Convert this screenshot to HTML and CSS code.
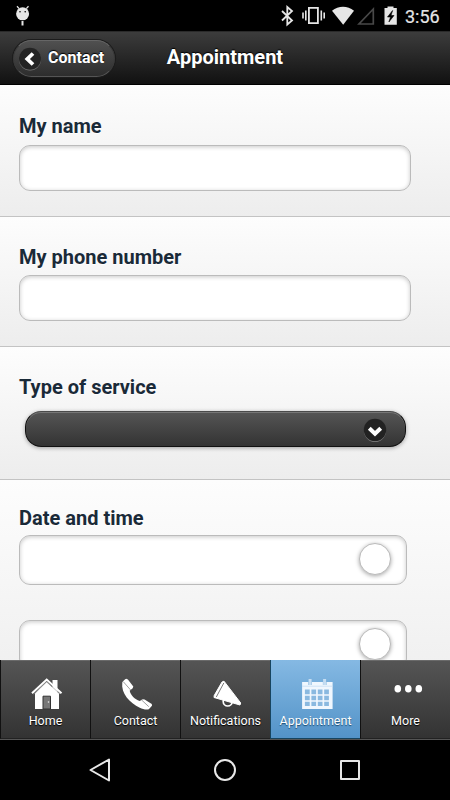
FILE: index.html
```html
<!DOCTYPE html>
<html lang="en">
<head>
<meta charset="utf-8">
<title>Appointment</title>
<link rel="stylesheet" href="styles.css">
</head>
<body>
<div class="screen">
  <div class="status">
    <svg class="debug" width="16" height="22" viewBox="0 0 16 22" fill="#e6e6e6">
      <path d="M2 1.300 4.200 3.600M13.500 1.300 11.300 3.600" stroke="#e6e6e6" stroke-width="1.300"/>
      <circle cx="7.600" cy="8.800" r="6.500"/>
      <circle cx="5" cy="6.800" r=".8" fill="#000"/><circle cx="10.200" cy="6.800" r=".8" fill="#000"/>
      <path d="M6.500 16h2v4.500h-2z"/>
    </svg>
    <svg class="signals" width="120" height="31" viewBox="280 0 120 31">
      <path d="M282 11l10 9.500-4.700 4V7l4.700 4-10 9.500" fill="none" stroke="#e6e6e6" stroke-width="1.800"/>
      <path d="M308.900 7.900h9v15.200h-9z" fill="none" stroke="#e6e6e6" stroke-width="1.800"/>
      <path d="M305.800 10.500v10M303 12.500v6M321.300 10.500v10M324.200 12.500v6" stroke="#e6e6e6" stroke-width="1.600"/>
      <path d="M332 10.800C338.500 5.400 347.500 5.400 354 10.800L343.200 24.700z" fill="#e6e6e6"/>
      <path d="M359 24h14.300V9z" fill="none" stroke="#484848" stroke-width="1.700"/>
      <path d="M387.500 6.500h6v1.600h3.300v16.600h-12.300V8.100h3z" fill="#e6e6e6"/>
      <path d="M392.600 10.500 387.500 17h3l-1.600 5 5.100-6.500h-3z" fill="#000" stroke="#000" stroke-width=".6"/>
    </svg>
    <span class="clock">3:56</span>
  </div>
  <header class="header">
    <div class="back">
      <svg class="disc" width="24" height="24" viewBox="0 0 24 24"><circle cx="12" cy="12.500" r="11" fill="#777"/><circle cx="12" cy="11.700" r="11" fill="#242424"/><path d="M15 6.500 9.300 12l5.700 5.500" fill="none" stroke="#fff" stroke-width="3.800"/></svg>
      <span>Contact</span>
    </div>
    <h1>Appointment</h1>
  </header>
  <main class="form">
    <section class="row name"><label>My name</label><div class="field"></div></section>
    <section class="row phone"><label>My phone number</label><div class="field"></div></section>
    <section class="row service"><label>Type of service</label>
      <div class="select"><svg width="24" height="25" viewBox="0 0 24 25"><circle cx="12" cy="13" r="11" fill="#888"/><circle cx="12" cy="12" r="11.200" fill="#222"/><path d="M6.300 10.200 12 15.700l5.700-5.500" fill="none" stroke="#fff" stroke-width="4"/></svg></div>
    </section>
    <section class="row date"><label>Date and time</label>
      <div class="field picker"><i></i></div>
      <div class="field picker"><i></i></div>
    </section>
  </main>
  <nav class="tabs">
    <div class="tab">
      <svg width="34" height="34" viewBox="0 0 34 34"><path d="M23.500 3h5v12h-5zM6 16.500 17.500 5 30 16.500V32H6z" fill="#fff"/><path d="M3 16.200 17.700 2.500 32.500 16.200" fill="none" stroke="#fff" stroke-width="2"/><path d="M4.500 17 17.700 4.800 31 17" fill="none" stroke="#aaa" stroke-width=".7"/><path d="M14 19.200h7.500V32H14z" fill="#777" stroke="#333"/><circle cx="19.500" cy="25" r=".8" fill="#eee"/></svg>
      <span>Home</span>
    </div>
    <div class="tab">
      <svg width="34" height="34" viewBox="-.8 -.7 34 34"><path d="M2.500 4.500C3.500 3 5 1.500 6.500 1l1.600.8 5.400 7-.6 1.800-3 2.400c1 4.500 5 8.500 10 10.200l3.100-1.700 1.800.2 7.200 4.600.2 1.800-3.200 3.400c-2.500.8-6 0-9-1.500C10 25 1 16 2.500 4.500z" fill="#fff"/><path d="M3.500 4l7.500 8.500M21.500 22l7.500 7" stroke="#777" stroke-width=".7"/></svg>
      <span>Contact</span>
    </div>
    <div class="tab">
      <svg width="34" height="34" viewBox="0 0 34 34"><circle cx="18.700" cy="24.500" r="4.500" fill="none" stroke="#fff" stroke-width="1.700"/><path d="M15 4.200 31.700 26 31 28 5 20.500 5.200 18.500 13 5z" fill="#fff" stroke="#fff" stroke-linejoin="round"/><path d="M14.800 6 7.300 20" stroke="#555" stroke-width=".8"/></svg>
      <span>Notifications</span>
    </div>
    <div class="tab active">
      <svg width="34" height="34" viewBox="-.6 -.5 34 34"><path d="M10.500 1.500v6M25 1.500v6" stroke="#c5ddf2" stroke-width="3"/><path d="M2.500 4.500h6.200v3h3.600v-3h11v3h3.600v-3H33v27H2.500z" fill="#f0f7fe"/><path d="M5.300 12h4.800v4.700H5.300zm6.500 0h4.700v4.700h-4.700zm6.400 0h4.700v4.700h-4.700zm6.400 0h4.700v4.700h-4.700zM5.300 18.200h4.800v4.500H5.300zm6.500 0h4.700v4.500h-4.700zm6.400 0h4.700v4.500h-4.700zm6.400 0h4.700v4.500h-4.700zM5.300 24.300h4.800v4.300H5.300zm6.500 0h4.700v4.300h-4.700zm6.400 0h4.700v4.300h-4.700zm6.400 0h4.700v4.300h-4.700z" fill="#8ab9e0"/><path d="M2.500 8.700H33" stroke="#c5ddf2" stroke-width=".8"/></svg>
      <span>Appointment</span>
    </div>
    <div class="tab">
      <svg width="34" height="34" viewBox="-.3 -.3 34 34"><g fill="#fff"><ellipse cx="8.500" cy="11.500" rx="3.300" ry="3.800"/><ellipse cx="19" cy="11.500" rx="3.300" ry="3.800"/><ellipse cx="29.500" cy="11.500" rx="3.300" ry="3.800"/></g></svg>
      <span>More</span>
    </div>
  </nav>
  <div class="system">
    <svg width="450" height="60" viewBox="0 740 450 60" fill="none" stroke="#e8e8e8" stroke-width="2" stroke-linejoin="round"><path d="M90.500 770 109 759.500v21z"/><circle cx="225" cy="770" r="10"/><path d="M341 761h18v18h-18z"/></svg>
  </div>
</div>
</body>
</html>
```
FILE: styles.css
```css
* { box-sizing: border-box; }
body { margin: 0; font-family: Roboto, "Liberation Sans", sans-serif; background: #000; }
svg { display: block; flex: none; }
.screen { width: 450px; height: 800px; display: flex; flex-direction: column; overflow: hidden; }
.status { height: 31px; flex: none; background: #000; display: flex; align-items: flex-start; color: #e6e6e6; }
.debug { margin: 5px 0 0 15px; }
.signals { margin-left: 249px; }
.clock { margin-left: 5px; font-size: 18px; line-height: 33px; font-weight: 400; -webkit-text-stroke: .2px #e6e6e6; }
.header { height: 54px; flex: none; display: grid; grid-template-columns: 115px 1fr 115px; align-items: start; padding-top: 8px; background: linear-gradient(#3c3c3c, #111); border-top: 1px solid #2a2a2a; border-bottom: 1px solid #000; color: #fff; text-shadow: 0 -1px 1px #000; }
.back { width: 102px; height: 37px; margin-left: 13px; padding-left: 4px; display: flex; align-items: center; gap: 6px; border-radius: 19px; border: 1px solid #666; border-left-color: #3a3a3a; border-right-color: #3a3a3a; border-bottom-color: #555; background: linear-gradient(#505050, #2d2d2d); font-size: 16px; font-weight: 700; box-shadow: 0 0 0 1px #1c1c1c; }
.back span { line-height: 18px; padding-bottom: 1px; }
.header h1 { margin: 0; font-size: 20px; line-height: 35px; text-align: center; font-weight: 700; }
.form { flex: 1; min-height: 0; overflow: hidden; background: #eee; }
.row { display: flex; flex-direction: column; align-items: flex-start; padding-left: 19px; background: linear-gradient(#fdfdfd, #ededed); border-bottom: 1px solid #c3c3c3; }
.row label { font-size: 20px; line-height: 24px; font-weight: 700; color: #1a2a38; text-shadow: 0 1px 0 #fff; }
.name { height: 132px; padding-top: 29px; }
.phone { height: 130px; padding-top: 28px; }
.service { height: 133px; padding-top: 28px; }
.date { height: 234px; padding-top: 26px; }
.field { width: 392px; height: 46px; margin-top: 7px; border: 1px solid #bbb; border-radius: 11px; background: #fff; box-shadow: inset 0 1px 4px rgba(0,0,0,.22); }
.phone .field { margin-top: 6px; }
.picker { width: 388px; height: 50px; margin-top: 5px; display: flex; justify-content: flex-end; padding: 7px 15px 0; flex: none; }
.picker + .picker { margin-top: 35px; }
.picker i { width: 32px; height: 32px; border-radius: 50%; background: #fff; border: 1px solid #bbb; box-shadow: 0 1px 4px rgba(0,0,0,.35); }
.select { width: 381px; height: 36px; margin: 12px 0 0 6px; display: flex; justify-content: flex-end; padding: 6px 18px 0 0; border: 1px solid #111; border-top-color: #4a4a4a; border-radius: 16px; background: linear-gradient(#555, #333); box-shadow: inset 0 1px 0 #777, 0 1px 4px rgba(0,0,0,.35); }
.tabs { height: 80px; flex: none; display: grid; grid-template-columns: repeat(5, 1fr); border-bottom: 1px solid #555; background: #333; }
.tab { display: flex; flex-direction: column; align-items: center; padding-top: 17px; border-left: 1px solid #111; border-bottom: 1px solid #222; background: linear-gradient(#555, #333); color: #fff; box-shadow: inset 0 1px 0 #6a6a6a; text-shadow: 0 1px 1px #000; }
.tab span { font-size: 12.5px; line-height: 16px; margin-top: 2px; }
.tab.active { background: linear-gradient(#85b9e3, #5393c8); border-color: #17445f; box-shadow: none; text-shadow: 0 1px 1px #194b70; }
.system { height: 60px; flex: none; background: #000; }
```
